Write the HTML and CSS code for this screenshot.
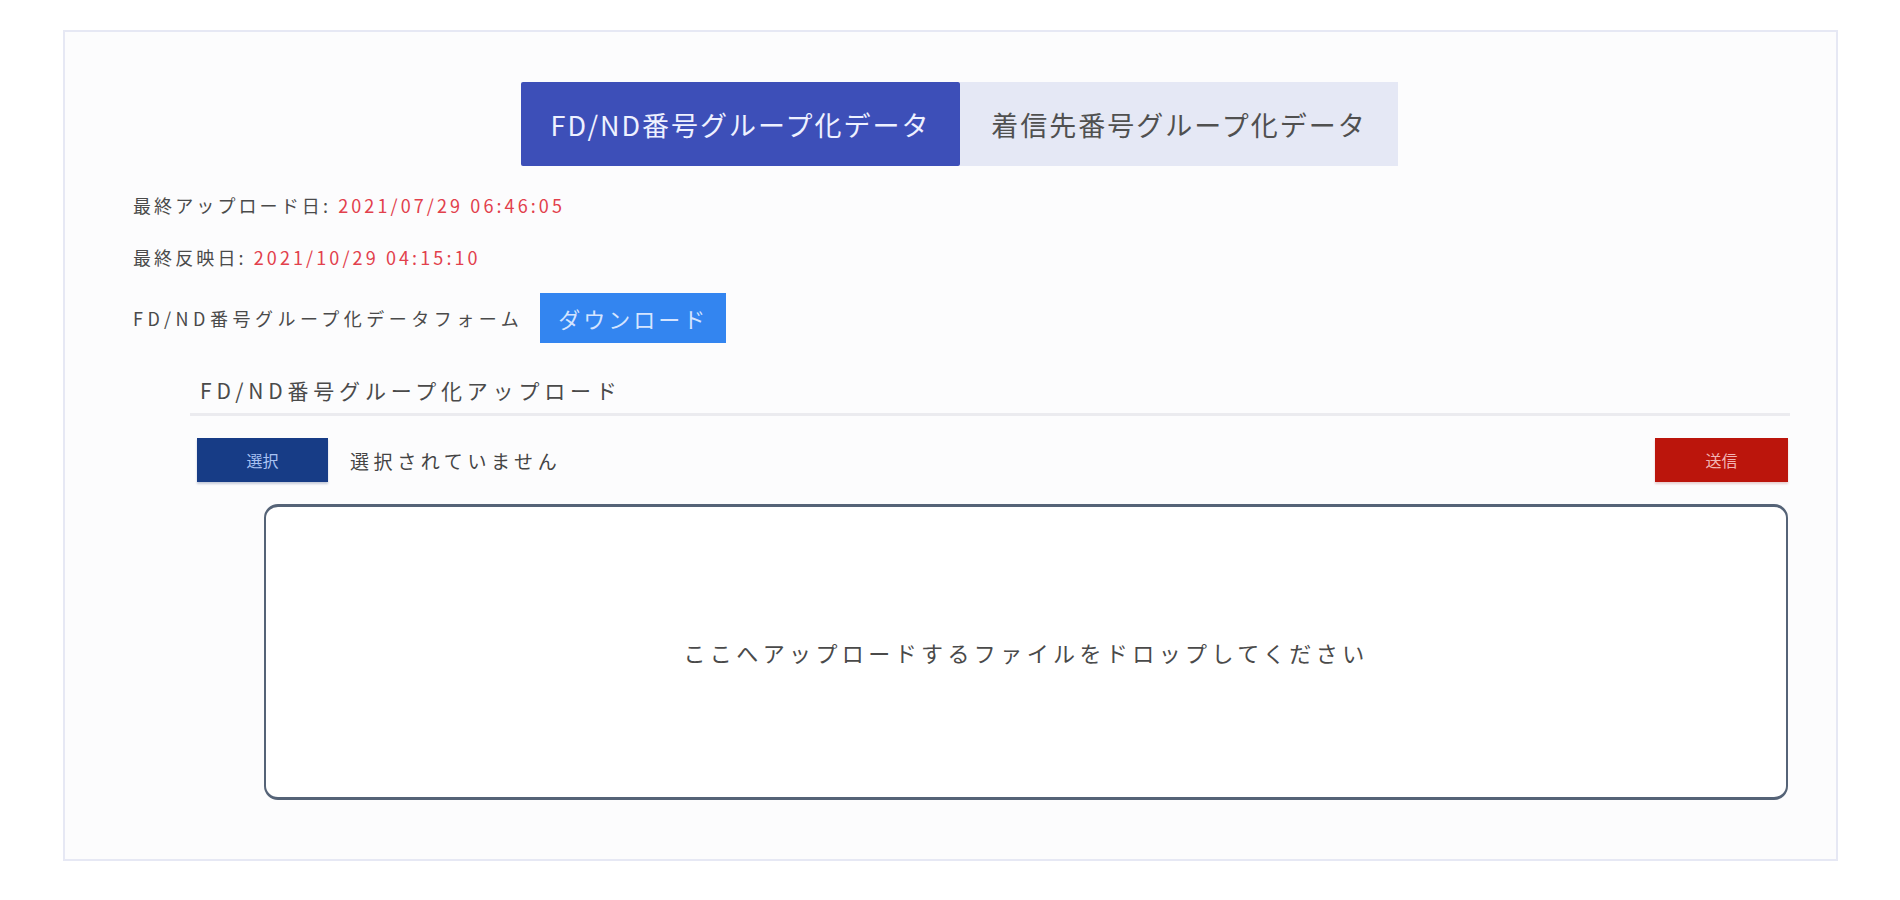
FILE: index.html
```html
<!DOCTYPE html>
<html lang="ja">
<head>
<meta charset="utf-8">
<title>FD/ND番号グループ化データ</title>
<link rel="stylesheet" href="styles.css">
</head>
<body>
<div class="card">
  <div class="tabs">
    <div class="tab tab-active">FD/ND番号グループ化データ</div>
    <div class="tab">着信先番号グループ化データ</div>
  </div>
  <div class="info">
    <p class="info-line">最終アップロード日: <span class="red">2021/07/29 06:46:05</span></p>
    <p class="info-line">最終反映日: <span class="red">2021/10/29 04:15:10</span></p>
    <div class="form-line">
      <span class="form-label">FD/ND番号グループ化データフォーム</span>
      <button class="btn-download">ダウンロード</button>
    </div>
  </div>
  <div class="upload">
    <div class="upload-title">FD/ND番号グループ化アップロード</div>
    <div class="select-row">
      <button class="btn-select">選択</button>
      <span class="no-file">選択されていません</span>
      <button class="btn-send">送信</button>
    </div>
    <div class="dropzone">ここへアップロードするファイルをドロップしてください</div>
  </div>
</div>
</body>
</html>
```

FILE: styles.css
```css
* { box-sizing: border-box; }
html, body {
  margin: 0;
  padding: 0;
  background: #ffffff;
  font-family: "Noto Sans CJK JP", "Noto Sans", sans-serif;
  color: #4a4a4a;
}
.card {
  margin: 30px 0 0 63px;
  width: 1775px;
  height: 831px;
  border: 2px solid #e6e8f4;
  background: #fcfcfd;
  padding: 50px 0 0 0;
}
.tabs {
  display: flex;
  padding-left: 456px;
}
.tab {
  height: 84px;
  width: 438px;
  display: flex;
  align-items: center;
  justify-content: center;
  font-size: 27px;
  letter-spacing: 2px;
  background: #e5e8f5;
  color: #505050;
}
.tab-active {
  width: 439px;
  background: #3d4fb8;
  color: #eef1ff;
  border-radius: 2px;
}
.info {
  padding-left: 68px;
}
.info-line {
  margin: 0;
  font-size: 18px;
  letter-spacing: 3.1px;
  line-height: 26px;
  color: #4a4a4a;
}
.info-line:first-child { margin-top: 26px; }
.info-line + .info-line { margin-top: 26px; }
.red { color: #e2404c; }
.form-line {
  display: flex;
  align-items: center;
  margin-top: 23px;
  gap: 17px;
}
.form-label {
  font-size: 18px;
  letter-spacing: 4.5px;
  color: #4a4a4a;
}
.btn-download {
  height: 50px;
  width: 186px;
  border: none;
  background: #3385f0;
  color: #d4e4ff;
  font-family: inherit;
  font-size: 22px;
  letter-spacing: 3px;
  padding: 0;
}
.upload {
  margin: 30px 0 0 125px;
  width: 1600px;
}
.upload-title {
  font-size: 21px;
  letter-spacing: 4.8px;
  padding: 0 0 6px 10px;
  line-height: 34px;
  color: #4a4a4a;
  border-bottom: 3px solid #ebebef;
}
.select-row {
  display: flex;
  align-items: center;
  margin-top: 22px;
  padding-left: 7px;
  padding-right: 2px;
}
.btn-select {
  width: 131px;
  height: 44px;
  border: none;
  background: #173c86;
  color: #a9c2f2;
  font-family: inherit;
  font-size: 16px;
  box-shadow: 0 2px 2px rgba(40, 60, 110, 0.25);
}
.no-file {
  margin-left: 22px;
  font-size: 19px;
  letter-spacing: 4.6px;
  color: #444;
}
.btn-send {
  margin-left: auto;
  width: 133px;
  height: 44px;
  border: none;
  background: #bb150c;
  color: #f2b4b4;
  font-family: inherit;
  font-size: 16px;
  box-shadow: 0 2px 2px rgba(150, 30, 30, 0.2);
}
.dropzone {
  margin: 22px 0 0 74px;
  width: 1524px;
  height: 296px;
  border: 2px solid #556377;
  border-top-width: 3px;
  border-bottom-width: 3px;
  border-radius: 14px;
  background: #ffffff;
  display: flex;
  align-items: center;
  justify-content: center;
  font-size: 22px;
  letter-spacing: 4.4px;
  color: #4a4a4a;
}
```
